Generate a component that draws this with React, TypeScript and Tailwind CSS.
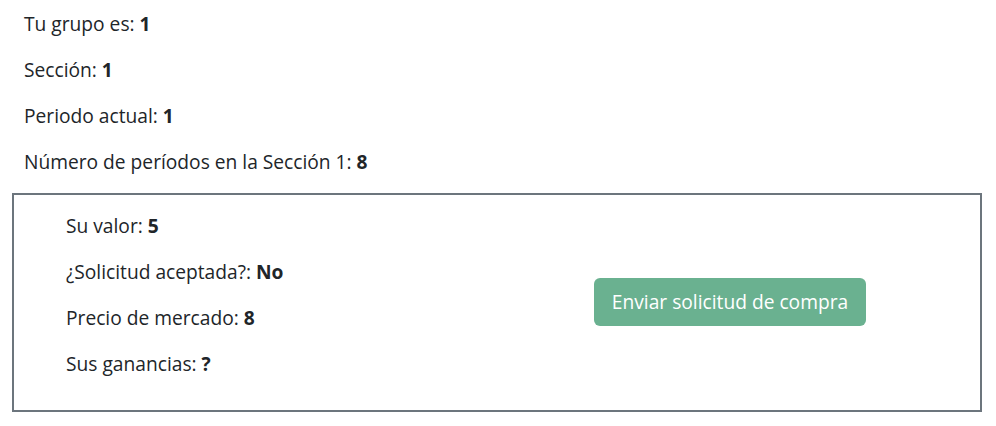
export default function App() {
  const font = { fontFamily: '"Open Sans", "Noto Sans", sans-serif' };
  return (
    <div className="bg-white text-[#212529] text-[19.2px] leading-6 w-[996px] h-[426px]" style={font}>
      <div className="px-3 pt-3">
        <div className="px-3">
          <p className="mb-[22px]">Tu grupo es: <b>1</b></p>
          <p className="mb-[22px]">Sección: <b>1</b></p>
          <p className="mb-[22px]">Periodo actual: <b>1</b></p>
          <p className="mb-[19px]">Número de períodos en la Sección 1: <b>8</b></p>
        </div>
        <div className="w-[970px] h-[219px] border-2 border-[#6c757d] flex">
          <div className="w-[483px] pl-[52px] pt-[19px]">
            <p className="mb-[22px]">Su valor: <b>5</b></p>
            <p className="mb-[22px]">¿Solicitud aceptada?: <b>No</b></p>
            <p className="mb-[22px]">Precio de mercado: <b>8</b></p>
            <p>Sus ganancias: <b>?</b></p>
          </div>
          <div className="flex-1 flex items-center pl-[97px] pb-[1px]">
            <button
              disabled
              className="h-12 w-[272px] rounded-md bg-[#6ab190] text-white text-[19.2px] leading-[30px] whitespace-nowrap"
            >
              Enviar solicitud de compra
            </button>
          </div>
        </div>
      </div>
    </div>
  );
}
